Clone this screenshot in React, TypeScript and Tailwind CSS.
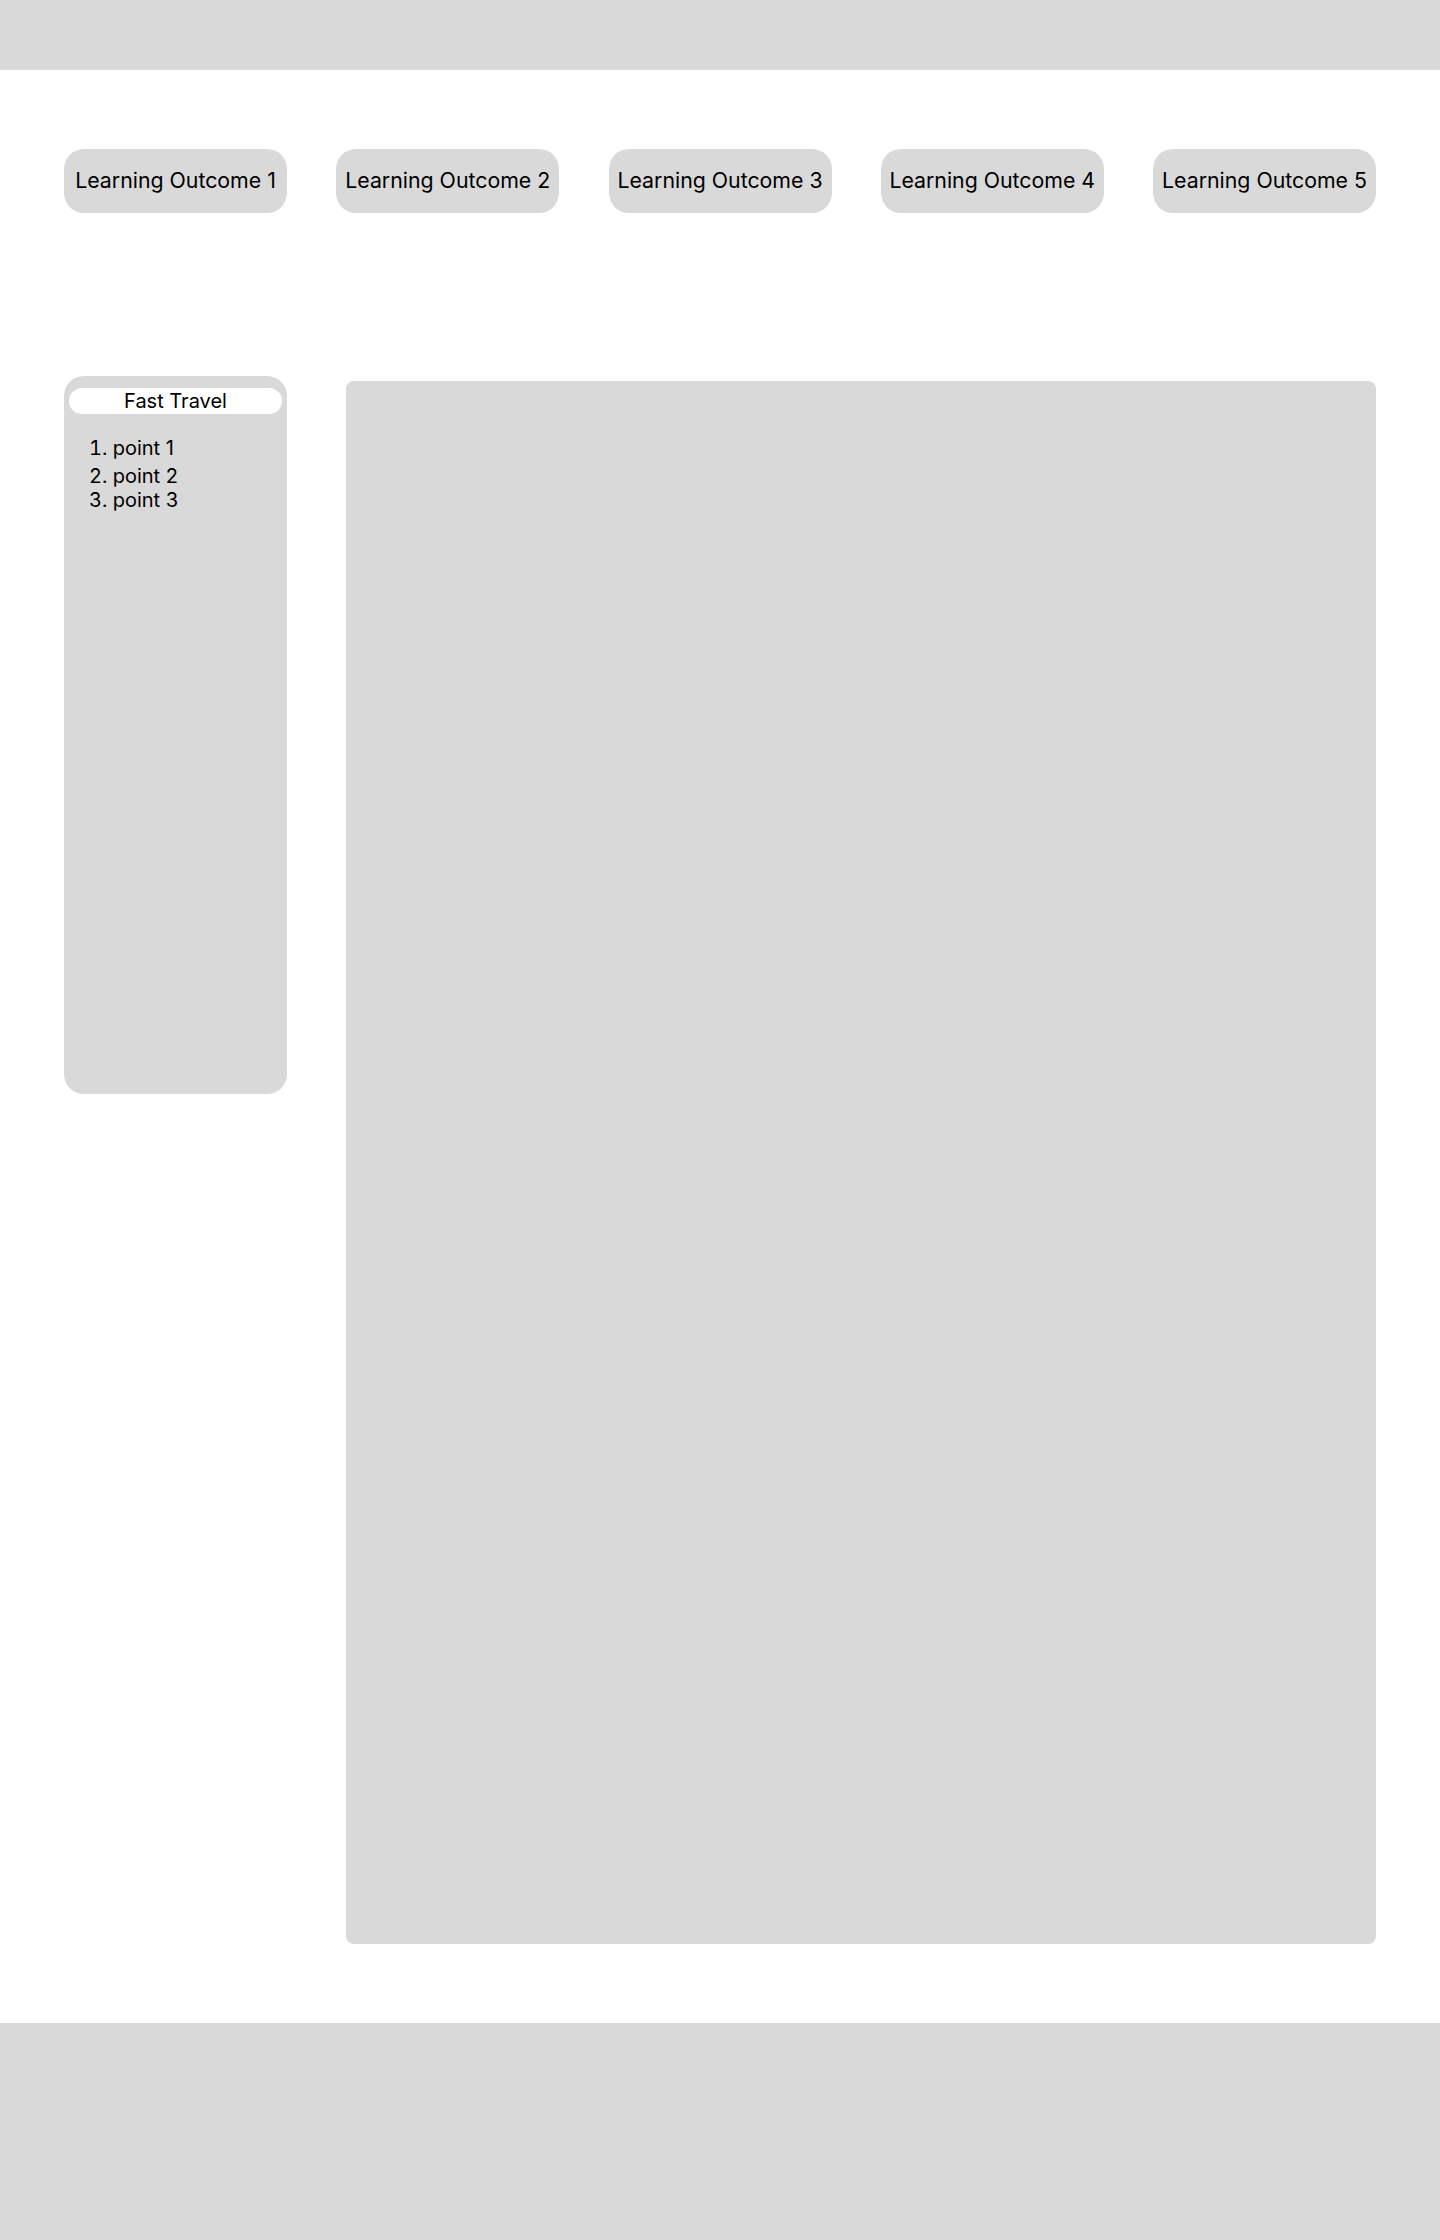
const outcomes = [
  'Learning Outcome 1',
  'Learning Outcome 2',
  'Learning Outcome 3',
  'Learning Outcome 4',
  'Learning Outcome 5',
];

const points = ['point 1', 'point 2', 'point 3'];

export default function App() {
  return (
    <div className="min-h-screen bg-white text-black" style={{ fontFamily: 'Inter, "Noto Sans", sans-serif' }}>
      {/* top bar */}
      <header className="h-[70px] bg-[#d9d9d9]" />

      {/* outcome tabs */}
      <nav className="flex justify-between px-16 pt-[79px]">
        {outcomes.map((label) => (
          <button
            key={label}
            className="flex h-16 w-[223px] items-center justify-center rounded-[20px] bg-[#d9d9d9] text-[21.3px] whitespace-nowrap"
          >
            {label}
          </button>
        ))}
      </nav>

      <section className="mt-[163px] flex items-start px-16">
        <aside className="h-[718px] w-[223px] shrink-0 rounded-[20px] bg-[#d9d9d9] pt-3">
          <div className="mx-[5px] flex h-[26px] items-center justify-center rounded-full bg-white text-[20px]">
            Fast Travel
          </div>
          <ol className="mt-[22px] list-inside list-decimal pl-[25px] text-[20px] leading-6">
            {points.map((p, i) => (
              <li key={p} className={i === 0 ? 'mb-1' : ''}>
                {p}
              </li>
            ))}
          </ol>
        </aside>

        <main className="ml-[59px] mt-[5px] h-[1563px] flex-1 rounded-lg bg-[#d9d9d9]" />
      </section>

      <footer className="mt-[79px] h-[217px] bg-[#d9d9d9]" />
    </div>
  );
}
